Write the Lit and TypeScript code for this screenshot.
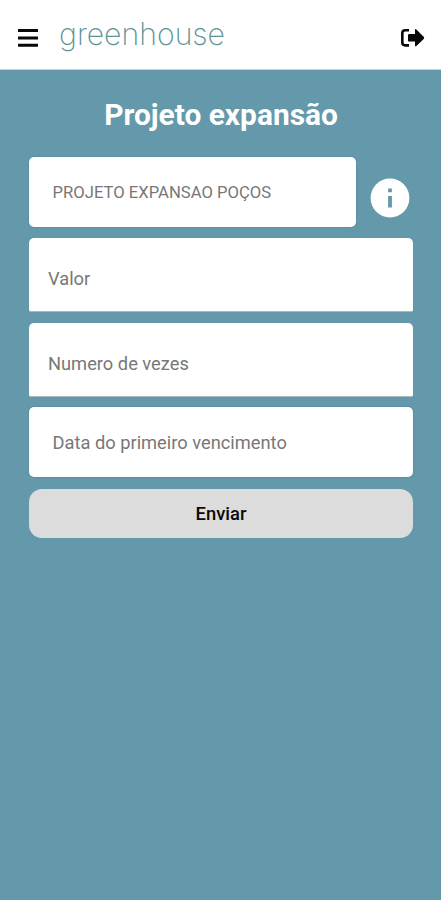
import { LitElement, html, css } from "lit";
import { customElement } from "lit/decorators.js";

@customElement("app-root")
export class AppRoot extends LitElement {
  static styles = css`
    :host {
      display: flex;
      flex-direction: column;
      height: 900px;
      background: #6499ab;
      font-family: Roboto, "Liberation Sans", sans-serif;
    }
    * {
      box-sizing: border-box;
    }
    header {
      display: flex;
      align-items: center;
      height: 70px;
      flex: none;
      padding: 6px 16px 0 18px;
      background: #fff;
      border-bottom: 1px solid #c5d5da;
    }
    svg {
      display: block;
      flex: none;
    }
    .logo {
      margin-left: 20px;
      margin-right: auto;
    }
    .logo text {
      font-family: Inter, sans-serif;
      font-weight: 200;
      font-size: 30.5px;
      fill: #5f9494;
    }
    main {
      display: flex;
      flex-direction: column;
      padding: 27px 28px 0 29px;
    }
    h1 {
      margin: 0 0 25px;
      height: 35px;
      line-height: 35px;
      font-size: 29.9px;
      font-weight: 700;
      text-align: center;
      color: #fff;
    }
    .row {
      display: flex;
      margin-bottom: 11px;
    }
    .field {
      display: flex;
      align-items: center;
      background: #fff;
      border-radius: 5px;
      color: #777;
      font-size: 18.3px;
      white-space: nowrap;
    }
    .plain {
      height: 70px;
      padding: 0 23.5px;
      box-shadow: 0 0 2px rgba(40, 90, 110, 0.45);
    }
    .project {
      width: 326.5px;
      font-size: 16.65px;
    }
    .info {
      margin: 21px 0 0 14.5px;
    }
    .lined {
      height: 74px;
      padding: 8px 19px 0;
      margin-bottom: 11px;
      border-bottom: 1.5px solid #a9b9bf;
      border-radius: 5px 5px 2px 2px;
    }
    .date {
      margin: -1px 0 12px;
      padding-top: 1px;
    }
    button {
      height: 48.5px;
      border: 0;
      border-radius: 13px;
      background: #dcdcdc;
      color: #0a0a0a;
      font: 500 18.4px Roboto, sans-serif;
      padding: 0;
    }
  `;

  render() {
    return html`
      <header>
        <svg width="21" height="20" viewBox="0 0 21 20">
          <path d="M0 2.5h20M0 10h20M0 17.3h20" stroke="#080808" stroke-width="3.1" />
        </svg>
        <svg class="logo" width="170" height="50" viewBox="0 0 170 50">
          <text x="0" y="32" textLength="166" lengthAdjust="spacingAndGlyphs">greenhouse</text>
        </svg>
        <svg width="25" height="20" viewBox="0 0 25 20">
          <path d="M9 2.2H5.2Q2.3 2.2 2.3 5v9.6q0 2.8 2.9 2.8H9" fill="none" stroke="#080808" stroke-width="2.6" />
          <path d="M8 7.2q0-1.2 1.2-1.2H15V2.1q0-1.8 1.4-.6l7.3 7.2q1 1.1 0 2.2l-7.3 7.2q-1.4 1.2-1.4-.6v-3.9H9.2Q8 13.6 8 12.4z" fill="#080808" />
        </svg>
      </header>
      <main>
        <h1>Projeto expansão</h1>
        <div class="row">
          <div class="field plain project">PROJETO EXPANSAO POÇOS</div>
          <svg class="info" width="40" height="40" viewBox="0 0 40 40">
            <circle cx="20" cy="20" r="19.4" fill="#fff" />
            <path d="M18.1 10.6h3.8v3.7h-3.8zM18.1 18h3.8v11.6h-3.8z" fill="#6499ab" />
          </svg>
        </div>
        <div class="field lined">Valor</div>
        <div class="field lined">Numero de vezes</div>
        <div class="field plain date">Data do primeiro vencimento</div>
        <button>Enviar</button>
      </main>
    `;
  }
}
